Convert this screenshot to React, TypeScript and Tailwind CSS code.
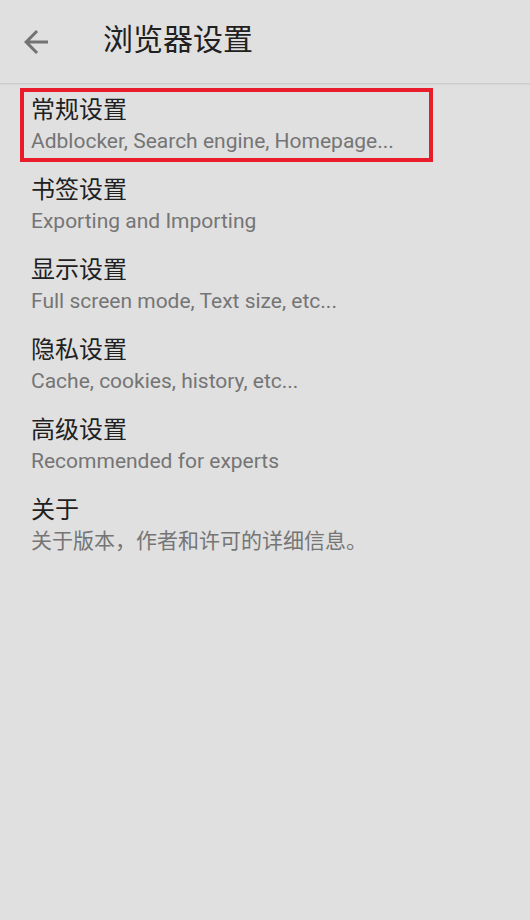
import React from "react";

const items = [
  { t: "常规设置", s: "Adblocker, Search engine, Homepage..." },
  { t: "书签设置", s: "Exporting and Importing" },
  { t: "显示设置", s: "Full screen mode, Text size, etc..." },
  { t: "隐私设置", s: "Cache, cookies, history, etc..." },
  { t: "高级设置", s: "Recommended for experts" },
  { t: "关于", s: "关于版本，作者和许可的详细信息。" },
];

export default function App() {
  return (
    <div
      className="w-[530px] h-[920px] bg-[#e0e0e0] overflow-hidden"
      style={{ fontFamily: 'Roboto, "Noto Sans CJK SC", sans-serif' }}
    >
      <div className="h-[84px] flex items-center border-b border-[#cdcdcd] shadow-[0_1px_1px_rgba(0,0,0,0.04)]">
        <div className="w-[103px] flex items-center pl-[18px]">
          <svg width="36" height="36" viewBox="0 0 24 24" fill="#737373">
            <path d="M20 11H7.83l5.59-5.59L12 4l-8 8 8 8 1.41-1.41L7.83 13H20v-2z" />
          </svg>
        </div>
        <div className="text-[30px] text-[#212121] leading-none -mt-[4px]">浏览器设置</div>
      </div>
      <div className="flex flex-col">
        {items.map((it, i) => (
          <div key={i} className="relative h-[80px] pl-[31px] pt-[10px]">
            <div className="text-[24px] leading-[32px] text-[#212121]">{it.t}</div>
            <div className="text-[21px] leading-[28px] text-[#757575] mt-[1px]">{it.s}</div>
            {i === 0 && (
              <div className="absolute left-[20px] top-[4px] w-[413px] h-[74px] border-[4px] border-[#e81c2b]" />
            )}
          </div>
        ))}
      </div>
    </div>
  );
}
